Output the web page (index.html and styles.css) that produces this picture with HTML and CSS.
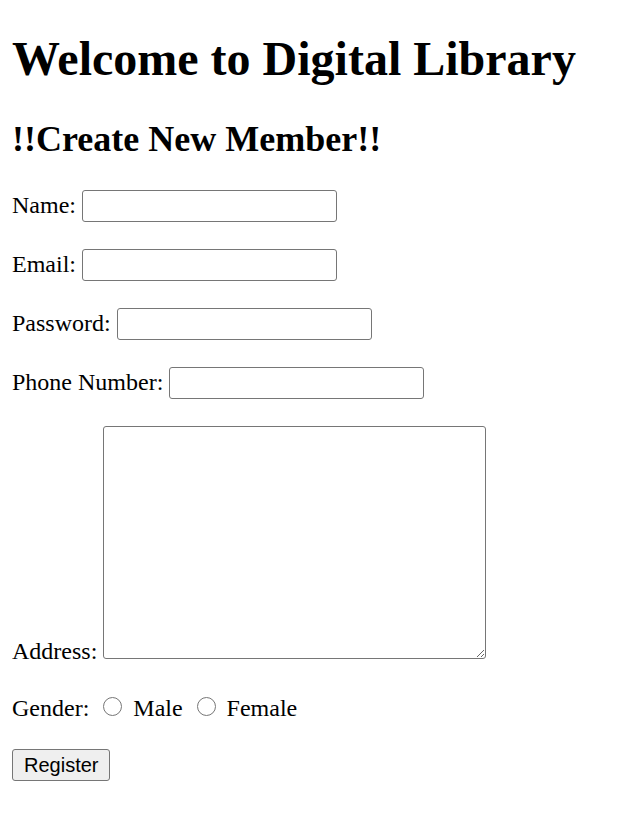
FILE: index.html
```html
<!DOCTYPE html>
<html>
<head>
<meta charset="utf-8">
<title>Digital Library</title>
<link rel="stylesheet" href="styles.css">
</head>
<body class="page">
<h1 class="title">Welcome to Digital Library</h1>
<h2 class="subtitle">!!Create New Member!!</h2>
<form class="form">
  <p class="row"><label>Name: </label><input class="field" type="text"></p>
  <p class="row"><label>Email: </label><input class="field" type="email"></p>
  <p class="row"><label>Password: </label><input class="field" type="password"></p>
  <p class="row"><label>Phone Number: </label><input class="field" type="text"></p>
  <p class="row row-address"><label>Address: </label><textarea class="area"></textarea></p>
  <p class="row row-gender"><label>Gender: </label><input class="radio" type="radio" name="g"> <label>Male</label> <input class="radio" type="radio" name="g"> <label>Female</label></p>
  <p class="row"><button class="btn" type="button">Register</button></p>
</form>
</body>
</html>
```
FILE: styles.css
```css
html { background: #fff; }
.page {
  margin: 12px;
  font-family: "Liberation Serif", "Times New Roman", serif;
  font-size: 24px;
  color: #000;
}
.title {
  font-size: 48px;
  font-weight: bold;
  margin: 19px 0 32px;
}
.subtitle {
  font-size: 36px;
  font-weight: bold;
  margin: 30px 0;
}
.form { margin: 0; }
.row { margin: 24px 0; }
.row-address { padding-bottom: 4px; }
.row-gender { padding-bottom: 3px; }
.field {
  box-sizing: border-box;
  width: 255px;
  height: 32px;
  border: 1px solid #767676;
  border-radius: 3px;
  padding: 1px 3px;
  font-family: "Liberation Sans", Arial, sans-serif;
  font-size: 20px;
  margin: 0 0 3px;
  background: #fff;
}
.area {
  box-sizing: border-box;
  width: 383px;
  height: 233px;
  border: 1px solid #767676;
  border-radius: 3px;
  margin: 0;
  font-family: "Liberation Mono", monospace;
  font-size: 20px;
}
.radio {
  width: 19px;
  height: 19px;
  margin: 4px 5px 0 8px;
}
.btn {
  box-sizing: border-box;
  font-family: "Liberation Sans", Arial, sans-serif;
  font-size: 20px;
  padding: 0 11px;
  height: 32px;
  border: 1px solid #767676;
  border-radius: 3px;
  background: #efefef;
  color: #000;
  margin: 0;
}
```
